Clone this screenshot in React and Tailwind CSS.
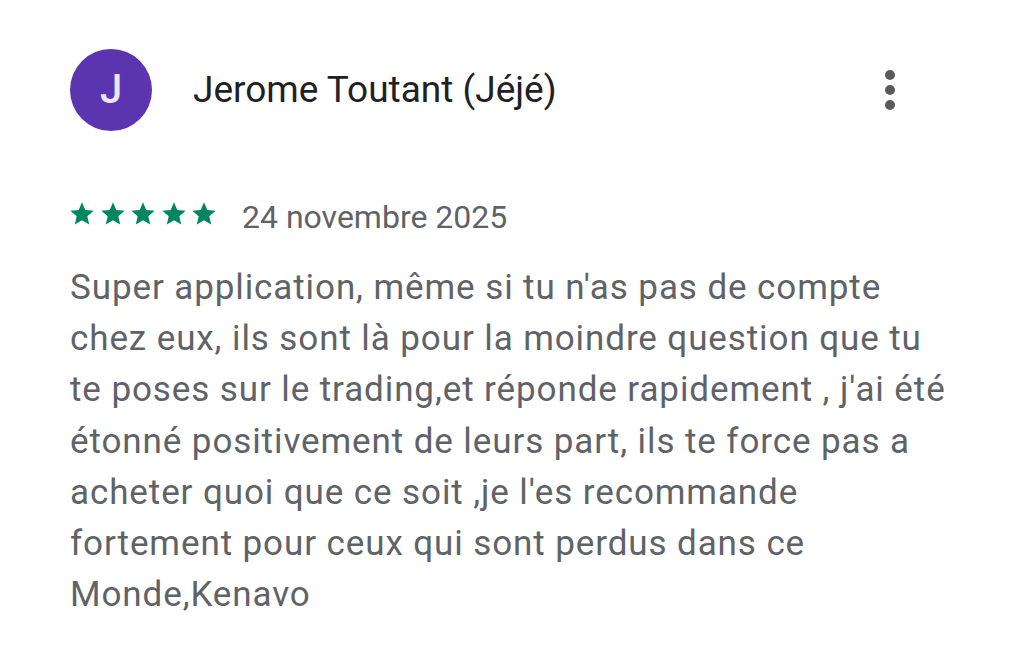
export default function App() {
  const stars = [0, 1, 2, 3, 4];
  return (
    <div
      className="h-[660px] w-[1027px] bg-white pl-[70px] pr-[70px] pt-[49px]"
      style={{ fontFamily: "Roboto, 'Noto Sans', sans-serif" }}
    >
      <div className="flex items-center">
        <div className="flex h-[82px] w-[82px] items-center justify-center rounded-full bg-[#5b34b0] text-[40px] font-medium leading-none text-[#eee5fb]">
          J
        </div>
        <div className="ml-[41px] text-[37px] text-[#202124]">Jerome Toutant (Jéjé)</div>
        <div className="ml-auto mr-[62px] flex flex-col gap-[5px]">
          <span className="block h-[10px] w-[10px] rounded-full bg-[#5a5a5a]" />
          <span className="block h-[10px] w-[10px] rounded-full bg-[#5a5a5a]" />
          <span className="block h-[10px] w-[10px] rounded-full bg-[#5a5a5a]" />
        </div>
      </div>

      <div className="mt-[69px] flex items-start">
        <div className="-ml-[2px] flex gap-[2.5px]">
          {stars.map((i) => (
            <svg key={i} viewBox="0 0 24 24" className="h-[28px] w-[28px] fill-[#01875f]">
              <path d="M12 17.27 18.18 21l-1.64-7.03L22 9.24l-7.19-.61L12 2 9.19 8.63 2 9.24l5.46 4.73L5.82 21z" />
            </svg>
          ))}
        </div>
        <span className="ml-[24px] mt-[1px] text-[32px] leading-none text-[#5f6368]">24 novembre 2025</span>
      </div>

      <p className="mt-[29px] text-[35px] leading-[51.2px] tracking-[0.9px] text-[#5f6368]">
        Super application, même si tu n'as pas de compte
        <br />
        chez eux, ils sont là pour la moindre question que tu
        <br />
        te poses sur le trading,et réponde rapidement , j'ai été
        <br />
        étonné positivement de leurs part, ils te force pas a
        <br />
        acheter quoi que ce soit ,je l'es recommande
        <br />
        fortement pour ceux qui sont perdus dans ce
        <br />
        Monde,Kenavo
      </p>
    </div>
  );
}
